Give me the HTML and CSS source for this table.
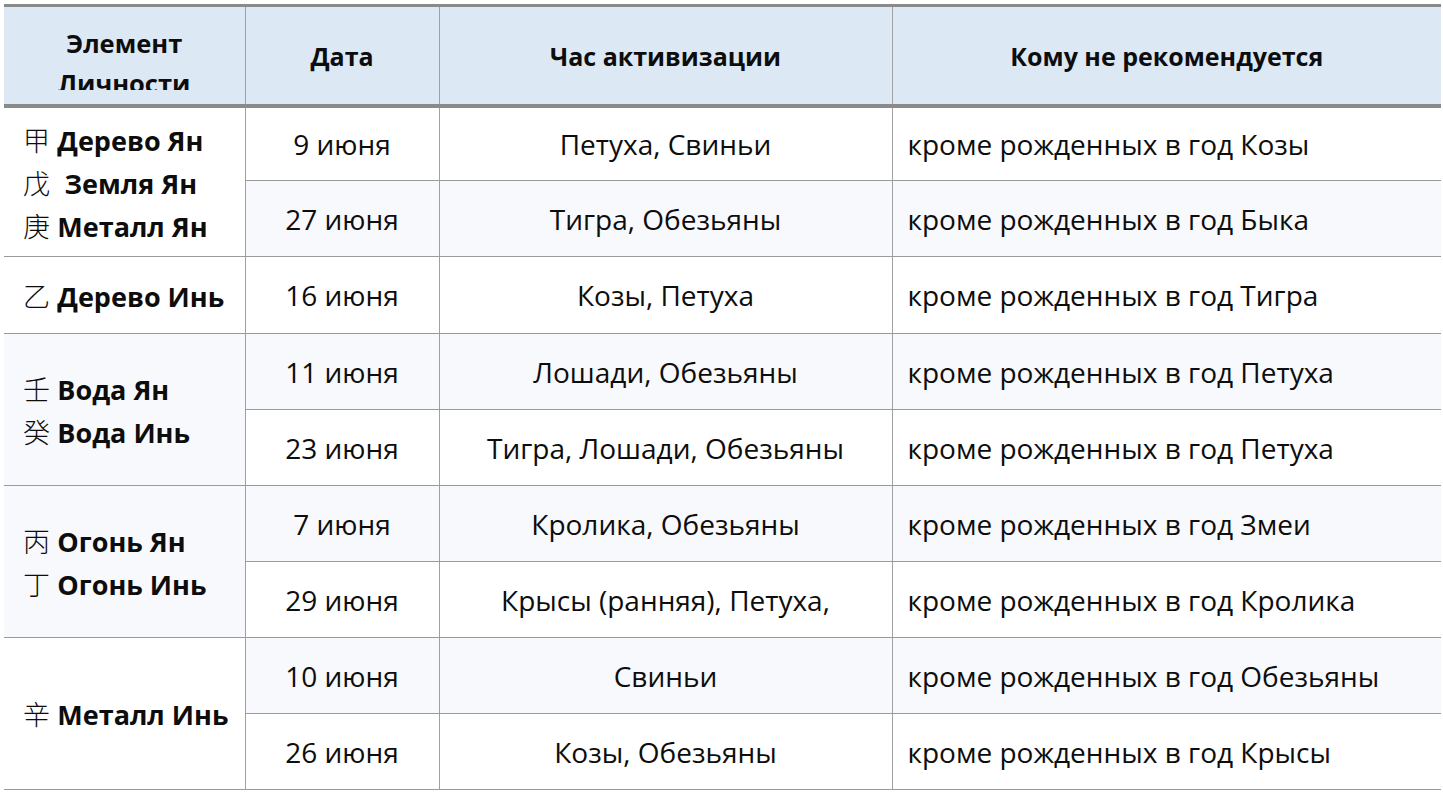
FILE: index.html
```html
<!DOCTYPE html>
<html lang="ru">
<head>
<meta charset="utf-8">
<title>Элемент Личности</title>
<link rel="stylesheet" href="styles.css">
</head>
<body>
<table class="grid">
  <colgroup>
    <col class="c-el">
    <col class="c-date">
    <col class="c-hour">
    <col class="c-who">
  </colgroup>
  <thead>
    <tr class="head">
      <th><div class="clip">Элемент<br>Личности</div></th>
      <th>Дата</th>
      <th>Час активизации</th>
      <th>Кому не рекомендуется</th>
    </tr>
  </thead>
  <tbody>
    <tr class="first">
      <td class="el" rowspan="2">
        <div class="ln"><span class="cjk">甲</span> <b>Дерево Ян</b></div>
        <div class="ln"><span class="cjk">戊</span> &nbsp;<b>Земля Ян</b></div>
        <div class="ln"><span class="cjk">庚</span> <b>Металл Ян</b></div>
      </td>
      <td class="ctr">9 июня</td>
      <td class="ctr">Петуха, Свиньи</td>
      <td class="who">кроме рожденных в год Козы</td>
    </tr>
    <tr class="alt">
      <td class="ctr">27 июня</td>
      <td class="ctr">Тигра, Обезьяны</td>
      <td class="who">кроме рожденных в год Быка</td>
    </tr>
    <tr class="tall">
      <td class="el"><div class="ln"><span class="cjk">乙</span> <b>Дерево Инь</b></div></td>
      <td class="ctr">16 июня</td>
      <td class="ctr">Козы, Петуха</td>
      <td class="who">кроме рожденных в год Тигра</td>
    </tr>
    <tr class="alt">
      <td class="el alt" rowspan="2">
        <div class="ln"><span class="cjk">壬</span> <b>Вода Ян</b></div>
        <div class="ln"><span class="cjk">癸</span> <b>Вода Инь</b></div>
      </td>
      <td class="ctr">11 июня</td>
      <td class="ctr">Лошади, Обезьяны</td>
      <td class="who">кроме рожденных в год Петуха</td>
    </tr>
    <tr>
      <td class="ctr">23 июня</td>
      <td class="ctr">Тигра, Лошади, Обезьяны</td>
      <td class="who">кроме рожденных в год Петуха</td>
    </tr>
    <tr class="alt">
      <td class="el alt" rowspan="2">
        <div class="ln"><span class="cjk">丙</span> <b>Огонь Ян</b></div>
        <div class="ln"><span class="cjk">丁</span> <b>Огонь Инь</b></div>
      </td>
      <td class="ctr">7 июня</td>
      <td class="ctr">Кролика, Обезьяны</td>
      <td class="who">кроме рожденных в год Змеи</td>
    </tr>
    <tr>
      <td class="ctr">29 июня</td>
      <td class="ctr">Крысы (ранняя), Петуха,</td>
      <td class="who">кроме рожденных в год Кролика</td>
    </tr>
    <tr class="alt">
      <td class="el plain" rowspan="2">
        <div class="ln"><span class="cjk">辛</span> <b>Металл Инь</b></div>
      </td>
      <td class="ctr">10 июня</td>
      <td class="ctr">Свиньи</td>
      <td class="who">кроме рожденных в год Обезьяны</td>
    </tr>
    <tr>
      <td class="ctr">26 июня</td>
      <td class="ctr">Козы, Обезьяны</td>
      <td class="who">кроме рожденных в год Крысы</td>
    </tr>
  </tbody>
</table>
</body>
</html>
```

FILE: styles.css
```css
html, body {
  margin: 0;
  padding: 0;
  background: #ffffff;
}

body {
  padding: 4px 2px 0 4px;
  font-family: "Open Sans", "Noto Sans", "Noto Sans CJK SC", sans-serif;
  color: #0d0d0d;
}

.grid {
  width: 1437px;
  border-collapse: collapse;
  table-layout: fixed;
  font-size: 28px;
}

.c-el { width: 241px; }
.c-date { width: 194px; }
.c-hour { width: 453px; }
.c-who { width: 549px; }

.head th {
  height: 97px;
  padding: 0 8px;
  background: #dde8f5;
  border-top: 3px solid #8a8a8a;
  border-bottom: 4px solid #8a8a8a;
  border-left: 1px solid #a0a0a0;
  font-size: 25px;
  font-weight: 700;
  text-align: center;
  vertical-align: middle;
  color: #0d0d0d;
}

.head th:first-child {
  border-left: none;
  vertical-align: top;
  font-size: 25.5px;
}

.clip {
  height: 67px;
  margin-top: 16px;
  overflow: hidden;
  line-height: 40px;
}

tbody td {
  height: 75px;
  padding: 0;
  border-bottom: 1px solid #9a9a9a;
  border-left: 1px solid #a0a0a0;
  vertical-align: middle;
}

tbody tr.first td { height: 72px; }
tbody tr.tall td { height: 76px; }

tbody td.el {
  border-left: none;
  padding-left: 19px;
  text-align: left;
}

tbody tr.alt td { background: #f8f9fc; }
tbody td.el.alt { background: #f8f9fc; }
tbody tr.alt td.el.plain { background: #ffffff; }

.ctr { text-align: center; }

.who {
  text-align: left;
  padding-left: 15px !important;
}

.ln {
  height: 43px;
  line-height: 43px;
  white-space: nowrap;
  overflow: visible;
}

.ln b {
  font-weight: 700;
  font-size: 27px;
  line-height: 43px;
}

.cjk {
  font-family: "Noto Sans CJK SC", sans-serif;
  font-weight: 300;
  font-size: 27px;
  line-height: 43px;
}
```
